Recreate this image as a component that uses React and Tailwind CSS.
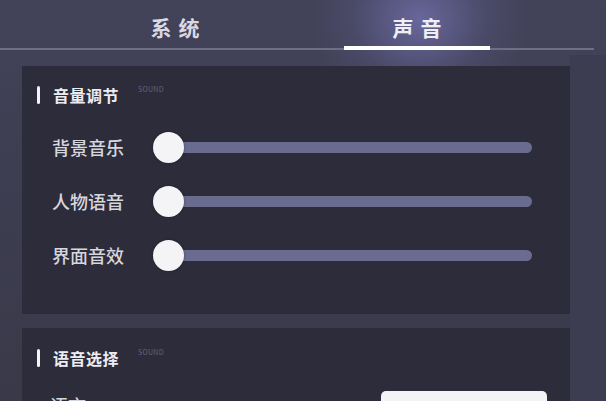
import React from "react";

const sans = { fontFamily: '"Noto Sans CJK SC", "Noto Sans", sans-serif' };

function SectionTitle({ title }) {
  return (
    <div className="flex h-[18px] items-center pl-[15px]">
      <div className="h-[18px] w-[3px] rounded-full bg-[#f2f2f7]" />
      <div className="ml-[13px] text-[16px] font-bold leading-none tracking-[0.5px] text-[#ececf2]">
        {title}
      </div>
      <div className="ml-[19px] self-start text-[7px] leading-none tracking-[0.3px] text-[#64647a]">
        SOUND
      </div>
    </div>
  );
}

function SliderRow({ label }) {
  return (
    <div className="flex h-[54px] items-center pl-[30px]">
      <div className="w-[101px] text-[18px] font-medium leading-none text-[#d6d6de]">{label}</div>
      <div className="relative flex h-[31px] w-[379px] items-center">
        <div className="ml-[15px] h-[11px] flex-1 rounded-full bg-[#6a6c8f]" />
        <div className="absolute left-0 top-0 h-[31px] w-[31px] rounded-full bg-[#f4f4f7] shadow-[0_0_3px_rgba(0,0,0,0.35)]" />
      </div>
    </div>
  );
}

export default function App() {
  return (
    <div
      className="relative h-[401px] w-[606px] overflow-hidden bg-gradient-to-b from-[#424259] to-[#393949]"
      style={sans}
    >
      {/* soft light behind the active tab */}
      <div className="pointer-events-none absolute left-[310px] top-[-80px] h-[200px] w-[220px] rounded-full bg-[radial-gradient(closest-side,rgba(130,128,200,0.6),rgba(110,108,170,0.2)_60%,rgba(0,0,0,0))]" />

      <div className="relative">
        {/* tab bar */}
        <div className="flex h-[50px] w-[594px] border-b-2 border-[#6e6e84]">
          <div className="ml-[102px] flex w-[146px] items-center justify-center pt-[8px] text-[21px] font-semibold tracking-[7px] text-[#d9d9e2]">
            <span className="ml-[7px]">系统</span>
          </div>
          <div className="relative ml-[96px] flex w-[146px] items-center justify-center pt-[8px] text-[21px] font-semibold tracking-[7px] text-[#eeeef5]">
            <span className="ml-[7px]">声音</span>
            <div className="absolute bottom-[-2px] left-0 h-[4px] w-full bg-white" />
          </div>
        </div>

        {/* volume panel */}
        <div className="ml-[22px] mt-[16px] h-[248px] w-[548px] bg-[#2d2c3b] pt-[20px]">
          <SectionTitle title="音量调节" />
          <div className="mt-[16px]">
            <SliderRow label="背景音乐" />
            <SliderRow label="人物语音" />
            <SliderRow label="界面音效" />
          </div>
        </div>

        {/* voice panel */}
        <div className="ml-[22px] mt-[14px] h-[120px] w-[548px] bg-[#2d2c3b] pt-[21px]">
          <SectionTitle title="语音选择" />
          <div className="mt-[24px] flex items-start pl-[28px]">
            <div className="w-[331px] pt-[5px] text-[18px] font-medium leading-none text-[#d6d6de]">语言</div>
            <div className="flex h-[34px] w-[166px] items-center rounded-[5px] bg-[#f3f3f6] pl-[26px] text-[16px] text-[#3a3a48]">
              中文
            </div>
          </div>
        </div>
      </div>

      {/* right edge strip */}
      <div className="pointer-events-none absolute right-0 top-[55px] h-[346px] w-[36px] bg-[#3d3d51]" />
    </div>
  );
}
